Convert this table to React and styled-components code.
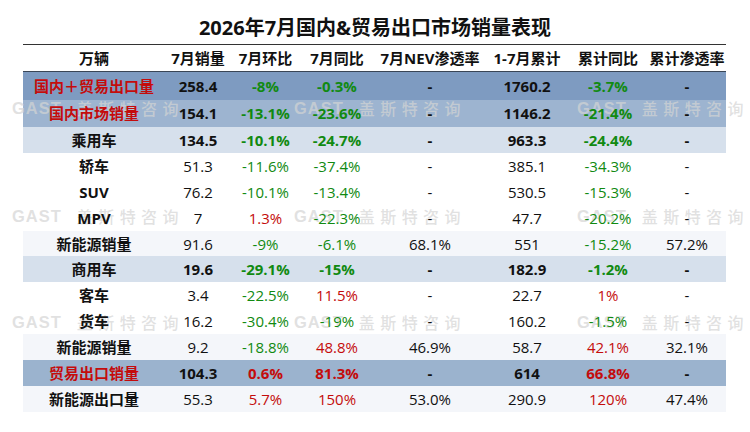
import React from "react";
import styled, { createGlobalStyle } from "styled-components";

const Global = createGlobalStyle`
  html, body { margin: 0; padding: 0; background: #ffffff; }
  body { font-family: "Open Sans", "Noto Sans CJK SC", sans-serif; }
`;

const RED = "#c40c0c";
const GREEN = "#118a11";
const COLS = "142px 66px 69px 74px 112px 82px 80px 78px";

const Page = styled.div`
  position: relative;
  width: 750px;
  height: 432px;
  overflow: hidden;
  background: #ffffff;
  color: #111;
`;

const Title = styled.h1`
  margin: 0;
  height: 44px;
  box-sizing: border-box;
  padding-top: 16px;
  text-align: center;
  font-size: 20px;
  line-height: 24px;
  font-weight: 700;
  color: #111;
`;

const Table = styled.div`
  margin-left: 23px;
  width: 703px;
  border-top: 1px solid #333;
`;

const Row = styled.div`
  display: grid;
  grid-template-columns: ${COLS};
  align-items: center;
  height: ${(p) => p.$h}px;
  background: ${(p) => p.$bg || "transparent"};
  font-weight: ${(p) => (p.$bold ? 700 : 400)};
`;

const HeaderRow = styled(Row)`
  height: 26px;
  font-weight: 700;
  border-bottom: 1.5px solid #3a4656;
`;

const Cell = styled.div`
  position: relative;
  z-index: 2;
  text-align: center;
  font-size: 15px;
  line-height: 20px;
  white-space: nowrap;
  color: ${(p) => p.$color || "#111"};
`;

const NameCell = styled(Cell)`
  font-weight: 700;
`;

const Watermarks = styled.div`
  position: absolute;
  inset: 0;
  z-index: 1;
  pointer-events: none;
`;

const Mark = styled.div`
  position: absolute;
  display: flex;
  align-items: center;
  white-space: nowrap;
  color: rgba(212, 212, 212, 0.7);
  line-height: 20px;
`;

const MarkLatin = styled.span`
  font-family: "Liberation Sans", Arial, sans-serif;
  font-weight: 700;
  font-size: 16.5px;
  letter-spacing: 1px;
  margin-right: 15px;
`;

const MarkCJK = styled.span`
  font-family: "Noto Sans CJK SC", sans-serif;
  font-weight: 500;
  font-size: 16px;
  letter-spacing: 5.4px;
`;

const headers = [
  "万辆",
  "7月销量",
  "7月环比",
  "7月同比",
  "7月NEV渗透率",
  "1-7月累计",
  "累计同比",
  "累计渗透率",
];

const rows = [
  { name: "国内＋贸易出口量", red: true, bg: "#7e9bc1", bold: true, h: 27.5, v: ["258.4", "-8%", "-0.3%", "-", "1760.2", "-3.7%", "-"] },
  { name: "国内市场销量", red: true, bg: "#9db4d0", bold: true, h: 27.5, v: ["154.1", "-13.1%", "-23.6%", "-", "1146.2", "-21.4%", "-"] },
  { name: "乘用车", bg: "#d6e0ec", bold: true, v: ["134.5", "-10.1%", "-24.7%", "-", "963.3", "-24.4%", "-"] },
  { name: "轿车", v: ["51.3", "-11.6%", "-37.4%", "-", "385.1", "-34.3%", "-"] },
  { name: "SUV", v: ["76.2", "-10.1%", "-13.4%", "-", "530.5", "-15.3%", "-"] },
  { name: "MPV", v: ["7", "1.3%", "-22.3%", "-", "47.7", "-20.2%", "-"] },
  { name: "新能源销量", bg: "#f4f6fa", v: ["91.6", "-9%", "-6.1%", "68.1%", "551", "-15.2%", "57.2%"] },
  { name: "商用车", bg: "#d6e0ec", bold: true, v: ["19.6", "-29.1%", "-15%", "-", "182.9", "-1.2%", "-"] },
  { name: "客车", v: ["3.4", "-22.5%", "11.5%", "-", "22.7", "1%", "-"] },
  { name: "货车", v: ["16.2", "-30.4%", "-19%", "-", "160.2", "-1.5%", "-"] },
  { name: "新能源销量", bg: "#f4f6fa", v: ["9.2", "-18.8%", "48.8%", "46.9%", "58.7", "42.1%", "32.1%"] },
  { name: "贸易出口销量", red: true, bg: "#9bb3ce", bold: true, v: ["104.3", "0.6%", "81.3%", "-", "614", "66.8%", "-"] },
  { name: "新能源出口量", bg: "#f4f6fa", v: ["55.3", "5.7%", "150%", "53.0%", "290.9", "120%", "47.4%"] },
];

const changeCols = [1, 2, 5];

function valueColor(idx, val) {
  if (!changeCols.includes(idx) || val === "-") return undefined;
  return val.startsWith("-") ? GREEN : RED;
}

const markTops = [98, 206, 312];
const markLefts = [12, 294, 577];

export default function App() {
  return (
    <Page>
      <Global />
      <Title>2026年7月国内&amp;贸易出口市场销量表现</Title>
      <Table>
        <HeaderRow>
          {headers.map((h) => (
            <Cell key={h}>{h}</Cell>
          ))}
        </HeaderRow>
        {rows.map((r, i) => (
          <Row key={i} $bg={r.bg} $bold={r.bold} $h={r.h || 25.9}>
            <NameCell $color={r.red ? RED : undefined}>{r.name}</NameCell>
            {r.v.map((val, j) => (
              <Cell key={j} $color={valueColor(j, val)}>
                {val}
              </Cell>
            ))}
          </Row>
        ))}
      </Table>
      <Watermarks>
        {markTops.map((t) =>
          markLefts.map((l) => (
            <Mark key={`${t}-${l}`} style={{ top: t, left: l }}>
              <MarkLatin>GAST</MarkLatin>
              <MarkCJK>盖斯特咨询</MarkCJK>
            </Mark>
          ))
        )}
      </Watermarks>
    </Page>
  );
}
